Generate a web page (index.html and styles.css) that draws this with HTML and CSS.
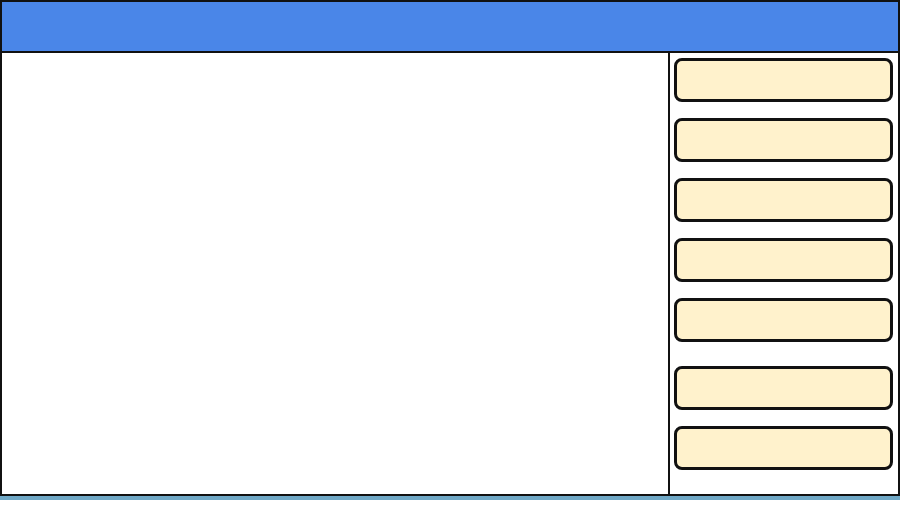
FILE: index.html
```html
<!DOCTYPE html>
<html>
<head>
	<title>Layout</title>
	<link rel="stylesheet" href="styles.css">
</head>
<body>
	<div class="top-bar"></div>
	<div class="main">
		<div class="canvas"></div>
		<div class="side">
			<div class="slot"></div>
			<div class="slot"></div>
			<div class="slot"></div>
			<div class="slot"></div>
			<div class="slot"></div>
			<div class="slot lower"></div>
			<div class="slot"></div>
		</div>
	</div>
	<div class="status"></div>
</body>
</html>
```

FILE: styles.css
```css
html, body { margin: 0; background: #fff; }
body { width: 900px; height: 506px; overflow: hidden; }
.top-bar { height: 49px; background: #4a86e8; border: 2px solid #111; }
.main { display: flex; height: 441px; border: 2px solid #111; border-top: 0; }
.canvas { flex: 1; border-right: 2px solid #111; }
.side { width: 228px; padding: 5px 5px 0 4px; box-sizing: border-box; display: flex; flex-direction: column; gap: 16px; }
.slot { height: 38px; background: #fff2cc; border: 3px solid #111; border-radius: 8px; }
.slot.lower { margin-top: 8px; }
.status { height: 4px; background: #6fa8c6; }
```
